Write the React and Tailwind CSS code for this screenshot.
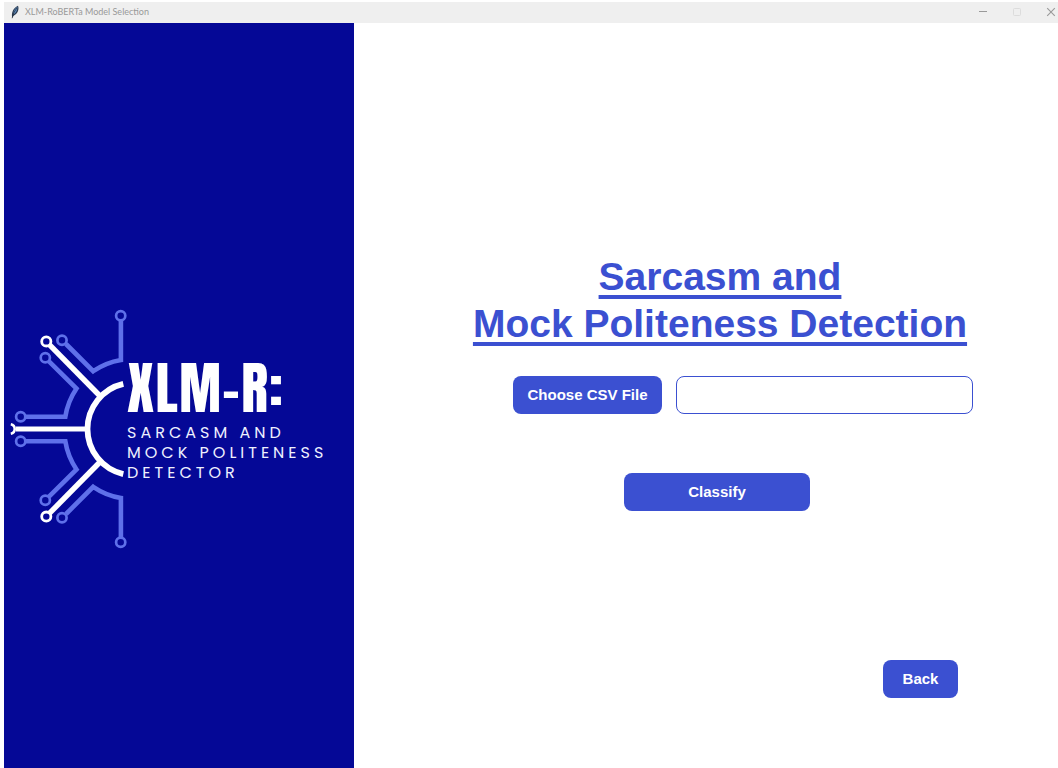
import React from "react";

function CircuitHalf() {
  return (
    <g fill="none">
      <g stroke="#5f70ea" strokeWidth="4.6" strokeMiterlimit="10">
        <path d="M120.9 321V360A70 70 0 0 0 93.2 371.2L66 344" />
        <path d="M49 361.4L76.5 388.5A70 70 0 0 0 65.3 416.8H26" />
        <g strokeWidth="2.7">
          <circle cx="120.7" cy="315.7" r="4.6" />
          <circle cx="62" cy="340.2" r="4.6" />
          <circle cx="45.3" cy="357.7" r="4.6" />
          <circle cx="20.7" cy="416.8" r="4.6" />
        </g>
      </g>
      <g stroke="#ffffff">
        <path d="M49.6 344.8L100 396" strokeWidth="5.4" />
        <circle cx="46.3" cy="341.4" r="4.6" strokeWidth="2.8" />
      </g>
    </g>
  );
}

function CircuitMark() {
  return (
    <svg viewBox="9 308 116 242" className="h-[242px] w-[116px] shrink-0 overflow-visible" aria-hidden="true">
      <CircuitHalf />
      <g transform="translate(0 858) scale(1 -1)">
        <CircuitHalf />
      </g>
      <g fill="none" stroke="#ffffff" strokeWidth="5">
        <path d="M123.3 383.9A46.3 46.3 0 0 0 123.3 474.1" strokeWidth="5.8" />
        <path d="M16 429H87" />
        <path d="M10.8 424.2A4.9 4.9 0 0 1 10.8 433.8" strokeWidth="2.6" />
      </g>
    </svg>
  );
}

function Feather() {
  return (
    <svg viewBox="0 0 10 14" className="h-[14px] w-[10px]" aria-hidden="true">
      <path d="M2.2 12.6C1.2 8 3 3.2 8 .8C9.3 4 8 8.6 3.6 10.8Z" fill="#2b3b50" />
      <path d="M3.4 9.6C3.3 6 4.8 3.4 7.4 1.8C7.6 4.6 6.4 7.8 3.4 9.6Z" fill="#5e8fc4" />
      <path d="M2.2 13.2C3 9 4.8 5.6 7 3" stroke="#26313f" strokeWidth=".8" fill="none" />
    </svg>
  );
}

function TitleBar() {
  return (
    <header className="flex h-[21px] items-center bg-[#efefef] pb-0.5 pl-1.5 text-[#999999]">
      <Feather />
      <span className="ml-[5px] font-['Lato',sans-serif] text-[9px] leading-4">
        XLM-RoBERTa Model Selection
      </span>
      <div className="ml-auto flex items-center gap-[22px] pr-px">
        <button type="button" aria-label="Minimize" className="flex h-4 w-3 items-center justify-center">
          <svg viewBox="0 0 10 10" className="size-[10px]">
            <path d="M1 4.5H9" stroke="#999999" />
          </svg>
        </button>
        <button type="button" aria-label="Maximize" disabled className="flex h-4 w-3 items-center justify-center">
          <svg viewBox="0 0 10 10" className="size-[10px]">
            <rect x="1.5" y="1.5" width="7" height="7" rx="1" stroke="#dcdcdc" fill="none" />
          </svg>
        </button>
        <button type="button" aria-label="Close" className="flex h-4 w-3 items-center justify-center">
          <svg viewBox="0 0 10 10" className="size-[10px]">
            <path d="M1.2 1.2L8.8 8.8M8.8 1.2L1.2 8.8" stroke="#999999" strokeWidth="1.1" />
          </svg>
        </button>
      </div>
    </header>
  );
}

function Brand() {
  return (
    <aside className="flex w-[350px] shrink-0 items-start bg-[#050896] pt-[285px] pl-[5px]">
      <CircuitMark />
      <div className="ml-0.5 pt-12 whitespace-nowrap text-white">
        <p className="font-['Anton','Roboto',sans-serif] text-[56px] leading-[64px] font-normal tracking-wide">
          XLM-R:
        </p>
        <p className="mt-[3px] font-['Poppins','Inter',sans-serif] text-base leading-5 tracking-[4px] text-[#eef0ff]">
          SARCASM AND
          <br />
          MOCK POLITENESS
          <br />
          DETECTOR
        </p>
      </div>
    </aside>
  );
}

function ActionButton({ className, ...props }) {
  return (
    <button
      type="button"
      className={`h-[38px] rounded-lg bg-[#3b50d1] text-[15px] font-bold text-white hover:bg-[#3042b5] ${className}`}
      {...props}
    />
  );
}

export default function App() {
  return (
    <div className="flex min-h-screen flex-col bg-white pt-0.5 pl-1 font-['Liberation_Sans',Arial,sans-serif]">
      <TitleBar />
      <div className="flex grow">
        <Brand />
        <main className="flex grow flex-col items-center pt-[230px] pb-[70px]">
          <h1 className="ml-7 text-center text-[39px] leading-[47px] font-bold text-[#3b50d1] underline decoration-4 underline-offset-[5px]">
            Sarcasm and
            <br />
            Mock Politeness Detection
          </h1>
          <div className="mt-[29px] ml-[74px] flex gap-3.5">
            <ActionButton className="w-[149px]">Choose CSV File</ActionButton>
            <input
              type="text"
              aria-label="CSV file path"
              className="h-[38px] w-[297px] rounded-lg border border-[#3b50d1] bg-white px-3 text-[15px] text-gray-800 outline-none"
            />
          </div>
          <ActionButton className="mt-[59px] ml-[22px] w-[186px]">Classify</ActionButton>
          <ActionButton className="mt-auto mr-[100px] w-[75px] self-end">Back</ActionButton>
        </main>
      </div>
    </div>
  );
}
